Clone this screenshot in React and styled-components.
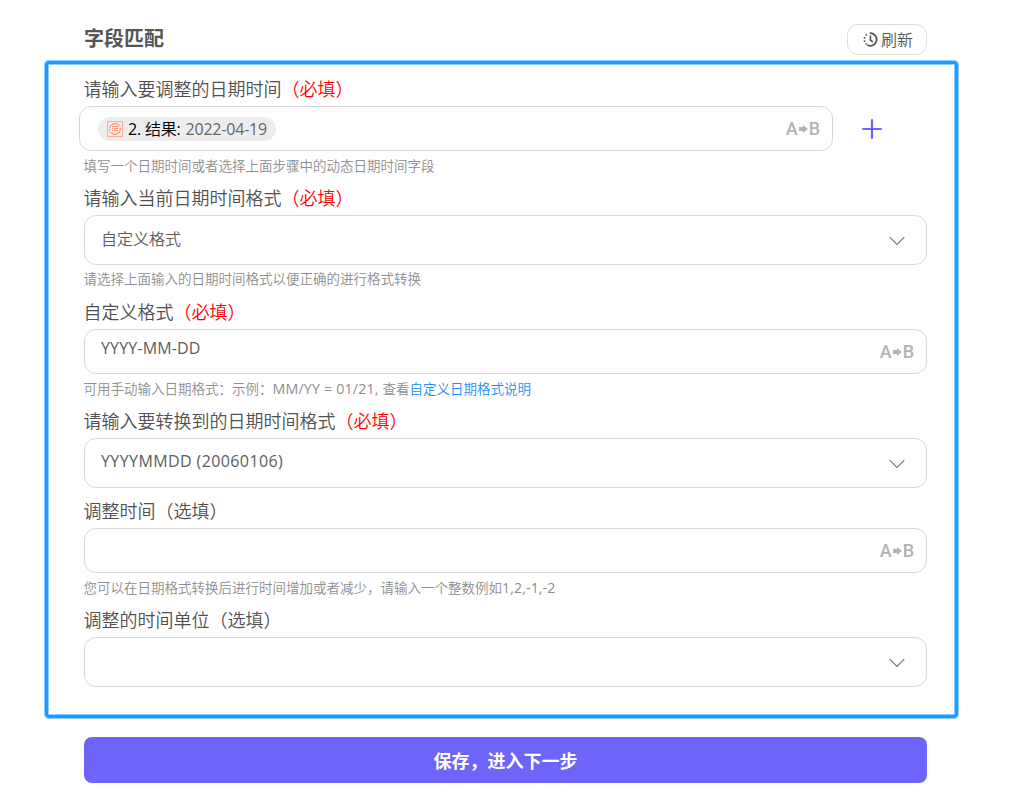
import React from "react";
import styled, { createGlobalStyle } from "styled-components";

const GlobalStyle = createGlobalStyle`
  * {
    box-sizing: border-box;
  }
  body {
    margin: 0;
    background: #fff;
    color: #505050;
    font-family: "Open Sans", "Noto Sans CJK SC", sans-serif;
    font-weight: 350;
  }
`;

const Page = styled.main`
  width: 1012px;
  height: 796px;
  padding: 24px 54px 0 45px;
`;

const Header = styled.header`
  display: flex;
  justify-content: space-between;
  height: 37px;
  padding: 0 31px 0 39px;
`;

const Title = styled.h1`
  margin: 0;
  color: #555;
  font-size: 20px;
  line-height: 30px;
  font-weight: 700;
`;

const RefreshButton = styled.button`
  display: flex;
  align-items: center;
  gap: 3px;
  width: 80px;
  height: 31px;
  padding: 0 0 0 15px;
  border: 1px solid #dedede;
  border-radius: 11px;
  background: #fff;
  color: #55575b;
  font-family: inherit;
  font-size: 16px;
  font-weight: 350;
  line-height: 30px;
`;

const Panel = styled.section`
  height: 657px;
  padding: 10px 28px 28px 36px;
  border: 3px solid #1c9aff;
  border-radius: 4px;
  box-shadow: 0 0 0 1px #8dccff, inset 0 0 0 1px #8dccff;
`;

const Field = styled.div`
  margin-bottom: ${(props) => (props.$gap ? "8px" : 0)};
`;

const Label = styled.div`
  height: 32px;
  margin-left: -0.5px;
  font-size: 18px;
  line-height: 30px;
  white-space: nowrap;
`;

const Required = styled.span`
  color: #f00;
`;

const Row = styled.div`
  display: flex;
  align-items: center;
  gap: 29px;
  margin-left: ${(props) => (props.$outset ? "-5px" : 0)};
`;

const Box = styled.div`
  display: flex;
  align-items: center;
  justify-content: space-between;
  width: ${(props) => props.$width || "843px"};
  height: ${(props) => (props.$select ? "50px" : "45px")};
  padding: 0 ${(props) => (props.$select ? "21px" : "12px")} 0 16px;
  border: 1px solid #d8d8d8;
  border-radius: 12px;
`;

const Value = styled.span`
  padding-bottom: ${(props) => props.$lift || "2px"};
  color: #5b5d61;
  font-size: 16px;
  font-weight: ${(props) => (props.$latin ? 400 : 350)};
  line-height: 24px;
  letter-spacing: ${(props) => props.$spacing || 0};
`;

const Tag = styled.span`
  display: flex;
  align-items: center;
  width: 178px;
  height: 24px;
  margin-top: 1px;
  margin-left: 2px;
  padding-left: 9px;
  border-radius: 12px;
  background: #ededed;
  color: #666;
  font-size: 16px;
  font-weight: 400;
  line-height: 24px;
  letter-spacing: -0.2px;
  white-space: pre;
`;

const TagName = styled.span`
  margin-left: 5px;
  margin-right: 1px;
  color: #000;
`;

const TagField = styled.span`
  font-weight: 350;
`;

const Hint = styled.div`
  height: 32px;
  margin-left: -0.5px;
  color: #8e8e8e;
  font-size: 13.5px;
  line-height: ${(props) => props.$line || "30px"};
  white-space: nowrap;
`;

const HintLatin = styled.span`
  font-size: 14.2px;
  font-weight: 400;
  letter-spacing: ${(props) => props.$spacing || 0};
`;

const Link = styled.a`
  color: #1890ff;
`;

const Swap = styled.span`
  display: flex;
  align-items: center;
  gap: 1px;
  color: #b3b3b3;
  font-family: Roboto, sans-serif;
  font-size: 18px;
  font-weight: 500;
  line-height: 20px;
`;

const SaveButton = styled.button`
  display: block;
  width: 843px;
  height: 46px;
  margin: 19px 0 0 39px;
  padding: 0;
  border: 0;
  border-radius: 8px;
  background: #6e64f9;
  color: #fff;
  font-family: inherit;
  font-size: 18px;
  font-weight: 700;
  line-height: 48px;
`;

const RefreshIcon = () => (
  <svg width="15" height="15" viewBox="0 0 15 15" fill="none" stroke="currentColor">
    <path d="M6.6 1.2a6.3 6.3 0 1 1-2.1 11.9" strokeWidth="1.8" />
    <path d="M3.9 12.5A6.3 6.3 0 0 1 5 1.7" strokeWidth="1.7" strokeDasharray="1.6 1.7" />
    <path d="M7.4 3.6v4.2l2.4 2.4" strokeWidth="1.7" />
  </svg>
);

const ResultIcon = () => (
  <svg width="16" height="16" viewBox="0 0 16 16" fill="none" stroke="#ff7c4d">
    <rect x=".5" y=".5" width="15" height="15" stroke="#ffae90" />
    <path d="M2.6 7a5.6 5.6 0 0 1 10.4-1.5M13.4 9A5.6 5.6 0 0 1 3 10.5" />
    <path d="M1.8 8.5h1.6M12.6 7.5h1.6" />
    <path d="M5 5.5h1M7 5.5h4M5 7.5h1M7 7.5h4M5 9.5h1M7 9.5h4" strokeWidth=".8" />
  </svg>
);

const Chevron = () => (
  <svg width="16" height="12" viewBox="0 -2 16 12" fill="none" stroke="#777" strokeWidth="1.1">
    <path d="M.7 1.2 8 8.4l7.3-7.2" />
  </svg>
);

const PlusIcon = () => (
  <svg width="20" height="20" viewBox="0 0 20 20" stroke="#6e64f9" strokeWidth="2.2" strokeLinecap="round">
    <path d="M10 1.1v17.8M1.1 10h17.8" />
  </svg>
);

const SwapMark = () => (
  <Swap>
    A
    <svg width="9" height="8" viewBox="0 0 9 8" fill="currentColor">
      <path d="M0 2h4V0l5 4-5 4V6H0z" />
    </svg>
    B
  </Swap>
);

const App = () => {
  return (
    <Page>
      <GlobalStyle />
      <Header>
        <Title>字段匹配</Title>
        <RefreshButton>
          <RefreshIcon />
          刷新
        </RefreshButton>
      </Header>

      <Panel>
        <Field>
          <Label>
            请输入要调整的日期时间<Required>（必填）</Required>
          </Label>
          <Row $outset>
            <Box $width="754px">
              <Tag>
                <ResultIcon />
                <TagName>
                  2. <TagField>结果</TagField>:{" "}
                </TagName>
                2022-04-19
              </Tag>
              <SwapMark />
            </Box>
            <PlusIcon />
          </Row>
          <Hint>填写一个日期时间或者选择上面步骤中的动态日期时间字段</Hint>
        </Field>

        <Field>
          <Label>
            请输入当前日期时间格式<Required>（必填）</Required>
          </Label>
          <Box $select>
            <Value>自定义格式</Value>
            <Chevron />
          </Box>
          <Hint $line="28px">请选择上面输入的日期时间格式以便正确的进行格式转换</Hint>
        </Field>

        <Field>
          <Label>
            自定义格式<Required>（必填）</Required>
          </Label>
          <Box>
            <Value $latin $lift="8px" $spacing="0.15px">YYYY-MM-DD</Value>
            <SwapMark />
          </Box>
          <Hint>
            可用手动输入日期格式：示例：<HintLatin $spacing="0.2px">MM/YY = 01/21, </HintLatin>查看
            <Link>自定义日期格式说明</Link>
          </Hint>
        </Field>

        <Field $gap>
          <Label>
            请输入要转换到的日期时间格式<Required>（必填）</Required>
          </Label>
          <Box $select>
            <Value $latin $lift="4px" $spacing="0.4px">YYYYMMDD (20060106)</Value>
            <Chevron />
          </Box>
        </Field>

        <Field>
          <Label>调整时间（选填）</Label>
          <Box>
            <Value />
            <SwapMark />
          </Box>
          <Hint>
            您可以在日期格式转换后进行时间增加或者减少，请输入一个整数例如
            <HintLatin $spacing="0.1px">1,2,-1,-2</HintLatin>
          </Hint>
        </Field>

        <Field>
          <Label>调整的时间单位（选填）</Label>
          <Box $select>
            <Value />
            <Chevron />
          </Box>
        </Field>
      </Panel>

      <SaveButton>保存，进入下一步</SaveButton>
    </Page>
  );
};

export default App;
